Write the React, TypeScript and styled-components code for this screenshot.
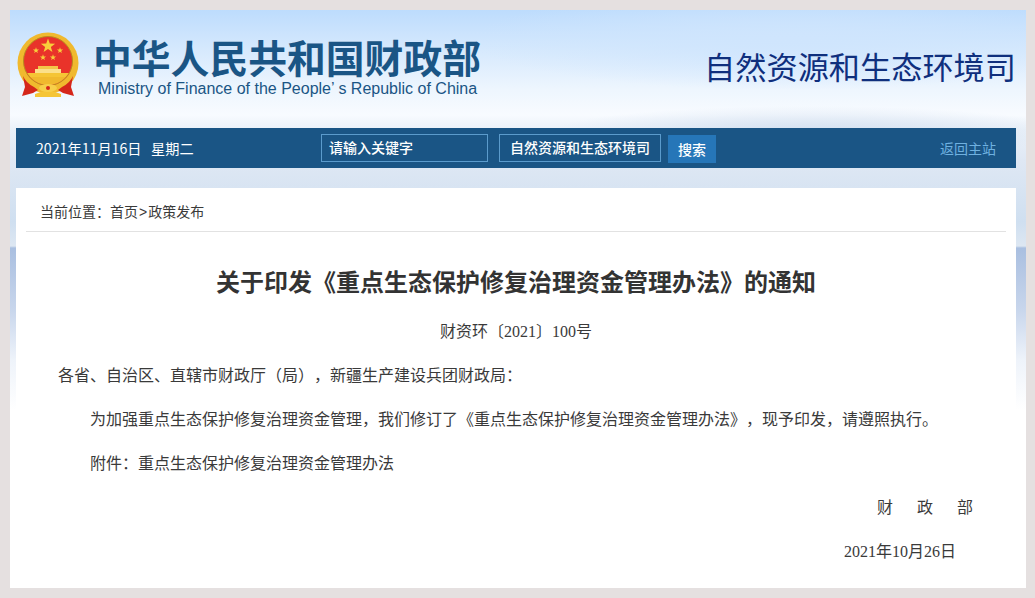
import styled, { createGlobalStyle } from "styled-components";

const GlobalStyle = createGlobalStyle`
    html, body {
        margin: 0;
        padding: 0;
        background: #e5e0e0;
        font-family: "Noto Sans CJK SC", "Liberation Sans", sans-serif;
        text-spacing-trim: space-all;
    }
`;

const Page = styled.div`
    width: 1035px;
    height: 598px;
    box-sizing: border-box;
    padding: 10px 9px 10px 10px;
    overflow: hidden;
`;

const Frame = styled.div`
    height: 578px;
    box-sizing: border-box;
    padding: 0 10px 0 6px;
    background:
        radial-gradient(ellipse 260px 26px at 800px 122px, #d3e0f0 0%, rgba(211, 224, 240, 0) 100%),
        radial-gradient(ellipse 320px 50px at 780px 30px, #cfe5fd 0%, rgba(207, 229, 253, 0) 100%),
        linear-gradient(180deg, #bddcfd 0px, #d6e9fd 40px, #eef6fe 80px, #f8fbff 105px, #eaf1f9 120px, #dfe8f4 150px, #cfdff0 212px, #dde7f2 236px, #a9bfe0 238px, #c8d6ec 300px, #eef3fa 350px, #fff 400px);
`;

const Header = styled.header`
    height: 118px;
    display: flex;
    justify-content: space-between;
    align-items: flex-start;
`;

const Brand = styled.div`
    display: flex;
    align-items: flex-start;
    gap: 13px;
    padding: 22px 0 0 1px;
`;

const BrandText = styled.div`
    display: flex;
    flex-direction: column;
    padding-top: 2px;
    color: #1a5585;
`;

const BrandTitle = styled.div`
    font-size: 38.8px;
    font-weight: 700;
    line-height: 44px;
    white-space: nowrap;
`;

const BrandEnglish = styled.div`
    font-family: "Liberation Sans", sans-serif;
    font-size: 16px;
    line-height: 18px;
    margin: 2px 0 0 5px;
    white-space: nowrap;
`;

const Department = styled.div`
    padding: 34px 0 0 0;
    font-size: 31.2px;
    line-height: 44px;
    color: #0f2f7d;
    white-space: nowrap;
`;

const NavBar = styled.nav`
    height: 40px;
    background: #1a5585;
    display: flex;
    align-items: center;
    color: #fff;
    font-size: 14px;
`;

const DateText = styled.div`
    width: 305px;
    box-sizing: border-box;
    padding-left: 20px;
    font-size: 14.2px;
    white-space: nowrap;
`;

const SearchBox = styled.div<{ $width: number }>`
    width: ${(props) => props.$width}px;
    height: 28px;
    box-sizing: border-box;
    border: 1px solid #5b9bcc;
    padding: 0 0 0 ${(props) => (props.$width > 165 ? 7 : 10)}px;
    margin-right: 11px;
    font-size: 14px;
    font-weight: 500;
    line-height: 24px;
    white-space: nowrap;
    margin-bottom: 1px;
`;

const SearchButton = styled.button`
    width: 48px;
    height: 28px;
    border: 0;
    padding: 0;
    margin: 2px 0 0 -4px;
    background: #2676b8;
    color: #fff;
    font-family: inherit;
    font-size: 14px;
    font-weight: 500;
    line-height: 28px;
`;

const HomeLink = styled.a`
    margin-left: auto;
    padding-right: 20px;
    color: #6fb1e0;
    font-size: 14px;
`;

const Card = styled.main`
    margin-top: 20px;
    height: 400px;
    box-sizing: border-box;
    background: #fff;
    padding: 0 10px;
    color: #3a3a3a;
    font-family: "Liberation Serif", "Noto Sans CJK SC", serif;
`;

const Breadcrumb = styled.div`
    height: 44px;
    box-sizing: border-box;
    border-bottom: 1px solid #e2e2e2;
    padding: 14px 0 0 14px;
    font-size: 14px;
    line-height: 20px;
`;

const CrumbArrow = styled.span`
    margin: 0 1px;
    font-family: "Liberation Sans", sans-serif;
`;

const Title = styled.h1`
    margin: 32px 0 0;
    text-align: center;
    font-family: "Noto Sans CJK SC", sans-serif;
    font-size: 24px;
    font-weight: 700;
    line-height: 34px;
    color: #333;
`;

const DocNumber = styled.p`
    margin: 23px 0 0;
    text-align: center;
    font-size: 16px;
    line-height: 22px;
`;

const Paragraph = styled.p<{ $indent?: boolean }>`
    margin: 22px 0 0;
    padding-left: ${(props) => (props.$indent ? 64 : 32)}px;
    font-size: 16px;
    line-height: 22px;
    white-space: nowrap;
`;

const Signature = styled.p<{ $right: number; $spacing?: number }>`
    margin: 22px 0 0;
    text-align: right;
    padding-right: ${(props) => props.$right}px;
    font-size: 16px;
    line-height: 22px;
    letter-spacing: ${(props) => props.$spacing ?? 0}px;
`;

const STAR = "M0 -1 L0.24 -0.32 L0.95 -0.31 L0.38 0.12 L0.59 0.81 L0 0.4 L-0.59 0.81 L-0.38 0.12 L-0.95 -0.31 L-0.24 -0.32 Z";

const Emblem = () => (
    <svg width="63" height="66" viewBox="0 0 63 66">
        <defs>
            <clipPath id="emblem-inner">
                <circle cx="31" cy="29" r="24" />
            </clipPath>
        </defs>
        <circle cx="31" cy="31" r="30.5" fill="#f0b92e" />
        <circle cx="31" cy="29" r="24.5" fill="#e9332a" stroke="#b98a1f" strokeWidth="1" />
        <g clipPath="url(#emblem-inner)">
            <rect x="21" y="34" width="20" height="3" fill="#f3c648" />
            <rect x="18" y="37" width="26" height="4" fill="#fbe08a" />
            <rect x="5" y="41" width="52" height="4" fill="#f5c535" />
            <rect x="5" y="45" width="52" height="10" fill="#f0b92e" />
        </g>
        <path d="M6 44 Q9 51 17 55 L21 58 L16 61 L5 64 L8 55 Z" fill="#d5271b" />
        <path d="M56 44 Q53 51 45 55 L41 58 L46 61 L57 64 L54 55 Z" fill="#d5271b" />
        <path d="M18 62 Q31 56 44 62 L44 65 L18 65 Z" fill="#f5c535" />
        <ellipse cx="31" cy="56" rx="9" ry="4" fill="#f7cf4a" />
        <circle cx="31" cy="56" r="2" fill="#d5271b" />
        <path d={STAR} fill="#f8cf3b" transform="translate(31 14) scale(7.5)" />
        <path d={STAR} fill="#f8cf3b" transform="translate(19 18.5) scale(3.2)" />
        <path d={STAR} fill="#f8cf3b" transform="translate(43 18.5) scale(3.2)" />
        <path d={STAR} fill="#f8cf3b" transform="translate(26 25.5) scale(3.2)" />
        <path d={STAR} fill="#f8cf3b" transform="translate(36 25.5) scale(3.2)" />
    </svg>
);

export default function App() {
    return (
        <Page>
            <GlobalStyle />
            <Frame>
                <Header>
                    <Brand>
                        <Emblem />
                        <BrandText>
                            <BrandTitle>中华人民共和国财政部</BrandTitle>
                            <BrandEnglish>Ministry of Finance of the People&rsquo; s Republic of China</BrandEnglish>
                        </BrandText>
                    </Brand>
                    <Department>自然资源和生态环境司</Department>
                </Header>
                <NavBar>
                    <DateText>2021年11月16日&nbsp;&nbsp;&nbsp;星期二</DateText>
                    <SearchBox $width={167}>请输入关键字</SearchBox>
                    <SearchBox $width={162}>自然资源和生态环境司</SearchBox>
                    <SearchButton>搜索</SearchButton>
                    <HomeLink>返回主站</HomeLink>
                </NavBar>
                <Card>
                    <Breadcrumb>当前位置：首页<CrumbArrow>&gt;</CrumbArrow>政策发布</Breadcrumb>
                    <Title>关于印发《重点生态保护修复治理资金管理办法》的通知</Title>
                    <DocNumber>财资环〔2021〕100号</DocNumber>
                    <Paragraph>各省、自治区、直辖市财政厅（局），新疆生产建设兵团财政局：</Paragraph>
                    <Paragraph $indent>为加强重点生态保护修复治理资金管理，我们修订了《重点生态保护修复治理资金管理办法》，现予印发，请遵照执行。</Paragraph>
                    <Paragraph $indent>附件：重点生态保护修复治理资金管理办法</Paragraph>
                    <Signature $right={9} $spacing={24}>财政部</Signature>
                    <Signature $right={50}>2021年10月26日</Signature>
                </Card>
            </Frame>
        </Page>
    );
}
